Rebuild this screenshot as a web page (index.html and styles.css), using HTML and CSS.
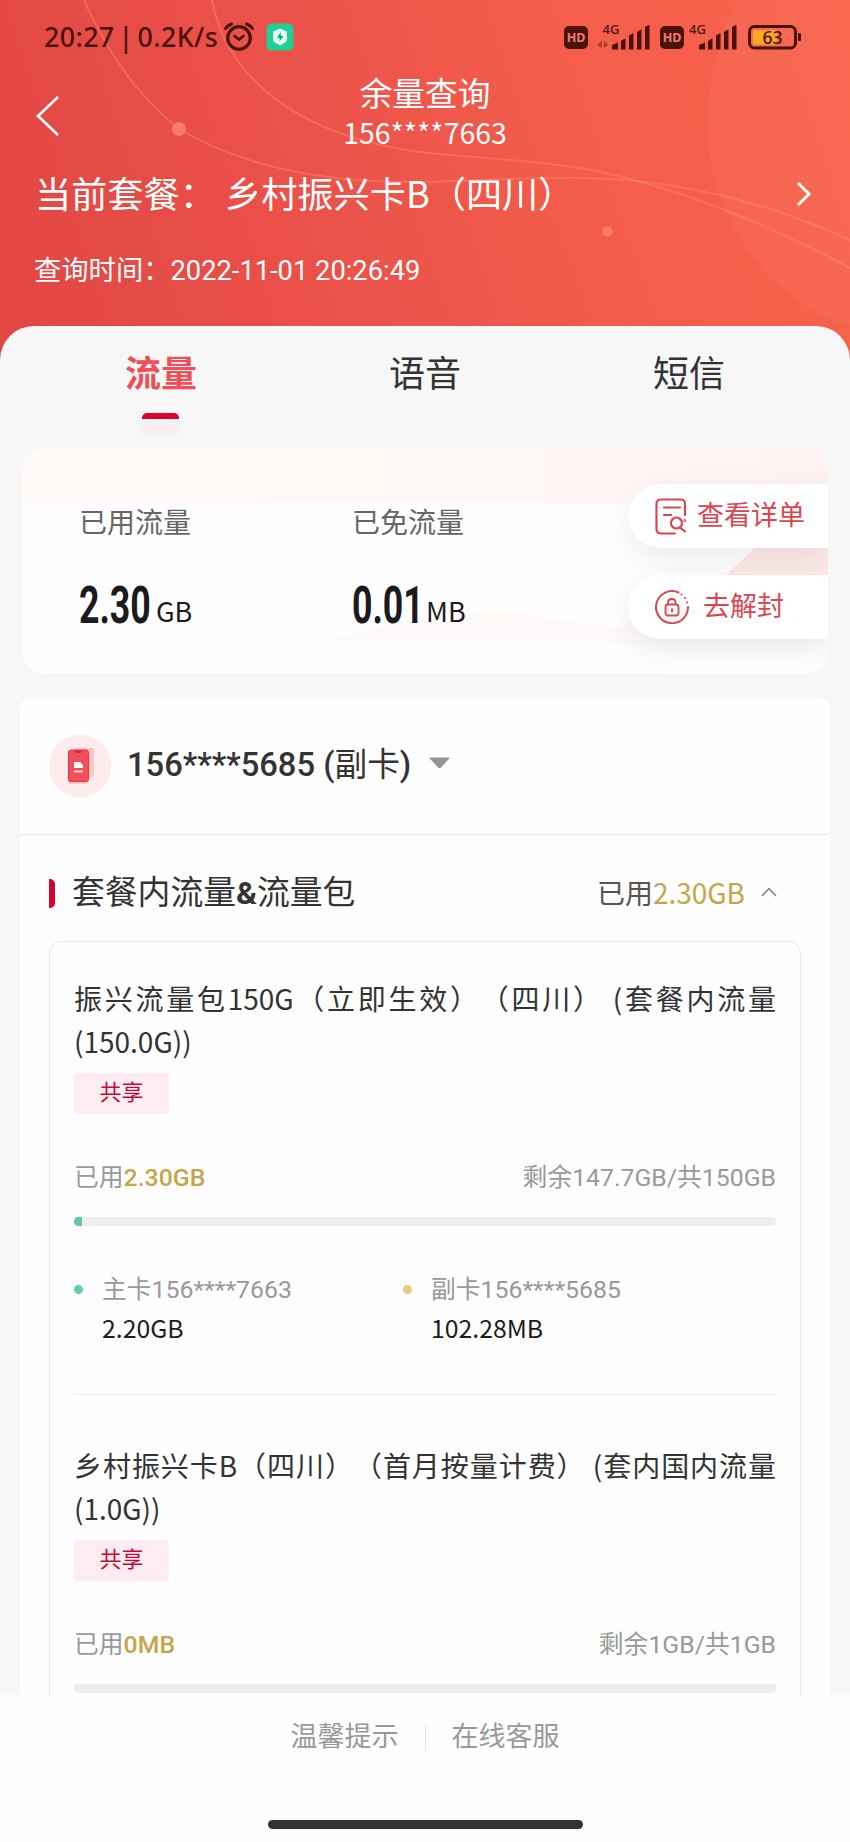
FILE: index.html
```html
<!DOCTYPE html>
<html lang="zh-CN">
<head>
<meta charset="utf-8">
<title>余量查询</title>
<link rel="stylesheet" href="styles.css">
</head>
<body>
<div class="screen">
  <header class="hero">
    <svg class="hero-art" viewBox="0 0 850 360" width="850" height="360" fill="none">
      <path class="bubble" d="M850 326C785 308 708 235 708 125C708 75 718 35 738 0H850Z"/>
      <path class="orbit" d="M84 0C93 20 100 32 110 50C131 84 154 109 179 129C226 157 300 184 425 182C480 180 520 178 575 178C670 178 760 199 850 240"/>
      <path class="orbit" d="M212 0C225 70 285 128 400 149C450 158 540 158 610 174C690 193 770 225 850 268"/>
      <circle class="spark" cx="179" cy="129" r="7"/>
      <circle class="spark" cx="607.500" cy="231.500" r="5"/>
    </svg>
    <div class="status">
      <span class="clock">20:27 | 0.2K/s</span>
      <svg class="alarm" width="32" height="30" viewBox="0 0 32 30" fill="none" stroke="#4b120d" stroke-linecap="round">
        <circle cx="16" cy="16" r="11.300" stroke-width="3.200"/>
        <path d="M11.500 14L16 17.500L20.500 14" stroke-width="2.800"/>
        <path d="M2.500 6.500Q5 3 8.500 2M29.500 6.500Q27 3 23.500 2" stroke-width="3"/>
      </svg>
      <svg class="shield" width="28" height="28" viewBox="0 0 28 28">
        <rect x=".5" y=".5" width="27" height="27" rx="5" fill="#1fcf94"/>
        <path d="M14 5.500L21 8.500V17Q21 19 14 22.500Q7 19 7 17V8.500Z" fill="#e2fff5"/>
        <path d="M14.800 9L10.800 14.800H13.600V18.600L17.400 13H14.800Z" fill="#15a674"/>
      </svg>
      <span class="hd">HD</span>
      <svg class="signal" width="54" height="36" viewBox="0 -8 54 36">
        <text class="net" x="5.500" y="10">4G</text>
        <path d="M0 21L5 16.500V24M7 24V16.500L11 21" fill="#a3402f"/>
        <path d="M15 21L21 18.500V25.500H15ZM24 17Q26 15 28.500 14.500V25.500H24ZM32 11.500Q34 10 36.500 9V25.500H32ZM40 8Q42 6 44.500 5.500V25.500H40ZM48 3Q50 1.500 52.500 1V25.500H48Z" fill="#4b120d"/>
      </svg>
      <span class="hd hd-second">HD</span>
      <svg class="signal signal-second" width="48" height="36" viewBox="0 -8 48 36">
        <text class="net" x="0" y="10">4G</text>
        <path d="M10 21L16 18.500V25.500H10ZM19 17Q21 15 23.500 14.500V25.500H19ZM27 11.500Q29 10 31.500 9V25.500H27ZM35 8Q37 6 39.500 5.500V25.500H35ZM43 3Q45 1.500 47.500 1V25.500H43Z" fill="#4b120d"/>
      </svg>
      <svg class="battery" width="54" height="25" viewBox="0 0 54 25">
        <rect x="1.500" y="1.500" width="46" height="21.500" rx="5" fill="none" stroke="#4b120d" stroke-width="3"/>
        <rect x="5" y="5" width="24" height="14.500" rx="2" fill="#f6a821"/>
        <rect x="50" y="8" width="3" height="8" rx="1" fill="#4b120d"/>
        <text class="level" x="24.500" y="18.500" text-anchor="middle">63</text>
      </svg>
    </div>
    <div class="navbar">
      <svg class="back" width="26" height="42" viewBox="0 0 26 42" fill="none"><path d="M23 2L3 21L23 40" stroke="#fff" stroke-width="2.600"/></svg>
      <div class="heading">
        <h1>余量查询</h1>
        <p>156****7663</p>
      </div>
    </div>
    <div class="plan">
      <span class="plan-label">当前套餐：</span>
      <span>乡村振兴卡B（四川）</span>
      <svg class="more" width="16" height="26" viewBox="0 0 16 26" fill="none"><path d="M2 2L13 13L2 24" stroke="#fff" stroke-width="3"/></svg>
    </div>
    <p class="time">查询时间：2022-11-01 20:26:49</p>
  </header>

  <main class="panel">
    <nav class="tabs">
      <span class="tab active">流量</span>
      <span class="tab">语音</span>
      <span class="tab">短信</span>
    </nav>

    <section class="summary">
      <svg class="waves" width="806" height="226" viewBox="0 0 806 226">
        <defs>
          <linearGradient id="fade" x2="1" y2="0"><stop offset="0" stop-color="#fff9f8"/><stop offset=".6" stop-color="#fff8f7"/><stop offset="1" stop-color="#fdf2f0"/></linearGradient>
          <linearGradient id="wave" x2="0" y2="1"><stop offset="0" stop-color="#fef5f3"/><stop offset="1" stop-color="#fefbfb"/></linearGradient>
        </defs>
        <rect width="806" height="56" fill="url(#fade)"/>
        <path d="M300 193Q400 166 465 165C530 166 550 178 600 178L806 150V198H300Z" fill="url(#wave)"/>
        <path d="M690 140L735 98L806 80V150Z" fill="#fdeae6"/>
      </svg>
      <div class="metric metric-used">
        <span class="metric-name">已用流量</span>
        <div class="metric-value"><span class="figure"><b>2.30</b></span><span class="unit">GB</span></div>
      </div>
      <div class="metric metric-free">
        <span class="metric-name">已免流量</span>
        <div class="metric-value"><span class="figure"><b>0.01</b></span><span class="unit unit-mb">MB</span></div>
      </div>
      <div class="actions">
        <a class="action">
          <svg width="32" height="37" viewBox="0 0 32 37" fill="none" stroke="#db4650" stroke-width="2.200" stroke-linecap="round">
            <path d="M20 35.500H6Q1.500 35.500 1.500 31V6Q1.500 1.500 6 1.500H26Q30 1.500 30 6V17M9 9.500H25M9 17H16M25.500 30L30 33.500"/>
            <circle cx="21.500" cy="25" r="5.500"/><circle cx="29.800" cy="22.500" r=".5"/>
          </svg>
          <span>查看详单</span>
        </a>
        <a class="action action-unlock">
          <svg width="34" height="34" viewBox="0 0 34 34" fill="none" stroke="#db4650" stroke-width="2" stroke-linecap="round">
            <path d="M23.500 2.500A16 16 0 1 0 33 17"/>
            <path d="M26.500 4.500h.1M30 8h.1M32 12.500h.1"/>
            <rect x="10.500" y="14.500" width="13" height="11" rx="2.500" stroke-width="1.800"/>
            <path d="M13 14V12.500Q13 9 17 9Q20.500 9 20.500 12.500V14M17 19V21.500" stroke-width="1.800"/>
          </svg>
          <span>去解封</span>
        </a>
      </div>
    </section>

    <section class="detail">
      <div class="owner">
        <svg class="avatar" width="64" height="64" viewBox="0 0 64 64">
          <circle cx="32" cy="32" r="31" fill="#fdebed"/>
          <rect x="26" y="14" width="20" height="29" rx="3" fill="#f9c3c5"/>
          <rect x="20" y="16" width="21" height="34" rx="3" fill="#fbc7c9"/>
          <rect x="20.500" y="16" width="20" height="31.500" rx="2.500" fill="#f0505a" stroke="#dc3844"/>
          <path d="M27 16.500H34L33 19H28Z" fill="#c92e3b"/>
          <path d="M26 28H32L35 31V34H26Z" fill="#fff"/><path d="M26 37.500H35" stroke="#ffd2d2" stroke-width="2"/>
        </svg>
        <span class="owner-name">156****5685 (<span class="owner-kind">副卡</span>)</span>
        <svg class="drop" width="21" height="12" viewBox="0 0 21 12"><path d="M1 .5H20Q21 .5 20 1.700L12 10.500Q10.500 12 9 10.500L1 1.700Q0 .5 1 .5Z" fill="#959595"/></svg>
      </div>

      <div class="group-head">
        <i class="marker"></i>
        <h2>套餐内流量<b>&amp;</b>流量包</h2>
        <span class="group-used">已用<em>2.30GB</em></span>
        <svg class="fold" width="16" height="10" viewBox="0 0 16 10" fill="none"><path d="M1 9L8 1.500L15 9" stroke="#777" stroke-width="1.400"/></svg>
      </div>

      <div class="packages">
        <article class="package">
          <h3>振兴流量包150G（立即生效）（四川） (套餐内流量(150.0G))</h3>
          <span class="tag">共享</span>
          <div class="quota"><span>已用<em>2.30GB</em></span><span>剩余147.7GB/共150GB</span></div>
          <div class="track"><i class="fill"></i></div>
          <div class="members">
            <div class="member">
              <i class="dot"></i>
              <p>主卡156****7663</p>
              <strong>2.20GB</strong>
            </div>
            <div class="member">
              <i class="dot dot-sub"></i>
              <p>副卡156****5685</p>
              <strong>102.28MB</strong>
            </div>
          </div>
        </article>
        <article class="package package-next">
          <h3>乡村振兴卡B（四川）（首月按量计费） (套内国内流量(1.0G))</h3>
          <span class="tag">共享</span>
          <div class="quota"><span>已用<em>0MB</em></span><span>剩余1GB/共1GB</span></div>
          <div class="track"></div>
        </article>
      </div>
    </section>
  </main>

  <footer class="footer">
    <div class="links"><span>温馨提示</span><i class="split"></i><span>在线客服</span></div>
    <div class="home-bar"></div>
  </footer>
</div>
</body>
</html>
```

FILE: styles.css
```css
* { box-sizing: border-box; margin: 0; padding: 0; }
body { background: #fff; }
i, em { font-style: normal; }
svg { display: block; flex: none; }

.screen {
  width: 850px;
  height: 1842px;
  display: flex;
  flex-direction: column;
  overflow: hidden;
  background: #f7f7f7;
  font-family: "Noto Sans CJK SC", sans-serif;
  color: #333;
  white-space: nowrap;
  text-spacing-trim: space-all;
}

/* header */
.hero {
  position: relative;
  flex: none;
  height: 360px;
  color: #fff;
  background: linear-gradient(72deg, #e14643 0%, #ec534a 42%, #f45d4b 68%, #f8644b 100%);
}
.hero-art { position: absolute; left: 0; top: 0; }
.bubble { fill: #fff; fill-opacity: .045; }
.orbit { stroke: #ff8f78; stroke-opacity: .4; stroke-width: 2; }
.spark { fill: #ff8877; fill-opacity: .75; }

.status {
  position: relative;
  height: 70px;
  padding: 0 48px 0 44px;
  display: flex;
  align-items: flex-start;
  color: #4b120d;
}
.clock {
  width: 180px;
  padding-top: 17px;
  font: 500 26.800px/40px "Noto Sans", sans-serif;
  letter-spacing: .4px;
  word-spacing: -3.500px;
}
.alarm { margin: 22px 0 0; }
.shield { margin: 23px 0 0 11px; }
.hd {
  width: 24px;
  height: 23px;
  margin: 26px 0 0 270px;
  border-radius: 5px;
  background: #4b120d;
  color: #f0806c;
  font: 700 12.500px/23px "Noto Sans", sans-serif;
  text-align: center;
}
.signal { margin: 16px 0 0 9px; }
.hd-second { margin-left: 9px; }
.signal-second { margin-left: 5px; }
.net { font: 500 13px "Noto Sans", sans-serif; fill: #4b120d; }
.battery { margin: 25px 0 0 11px; }
.level { font: 500 17.500px "Noto Sans", sans-serif; fill: #4b120d; }

.navbar { position: relative; height: 86px; }
.back { position: absolute; left: 35px; top: 25px; }
.heading { text-align: center; }
.heading h1 { font-size: 32.700px; line-height: 44px; font-weight: 400; }
.heading p { font-size: 28.400px; line-height: 36px; }

.plan {
  position: relative;
  height: 76px;
  padding: 0 38px 0 35px;
  display: flex;
  align-items: center;
  font-size: 36.200px;
}
.plan span { margin-top: -4px; }
.plan-label { width: 190px; }
.more { margin-left: auto; }
.time {
  position: relative;
  padding: 19px 0 0 34px;
  font: 27.300px/40px Roboto, "Noto Sans CJK SC", sans-serif;
}

/* content panel */
.panel {
  position: relative;
  flex: none;
  height: 1369px;
  margin-top: -34px;
  padding: 0 20px;
  overflow: hidden;
  border-radius: 34px 34px 0 0;
  background: #f7f7f7;
}
.tabs { height: 122px; padding: 0 9px; display: flex; }
.tab {
  position: relative;
  flex: 1;
  padding-top: 16px;
  text-align: center;
  font-size: 36px;
  line-height: 58px;
}
.active { color: #ef4f56; font-weight: 700; }
.active::after {
  content: "";
  position: absolute;
  left: 50%;
  top: 87px;
  width: 37px;
  height: 5.500px;
  margin-left: -19px;
  border-radius: 5px 5px 0 0;
  background: #d8052c;
  box-shadow: 0 11px 10px rgba(255, 90, 90, .14);
}

.summary {
  position: relative;
  height: 226px;
  margin: 0 2px;
  display: flex;
  overflow: hidden;
  border-radius: 24px;
  background: #fefefe;
}
.waves { position: absolute; left: 0; top: 0; }
.metric { position: relative; flex: none; padding-top: 53px; }
.metric-used { width: 273px; margin-left: 57px; }
.metric-free { width: 272px; }
.metric-name { display: block; font-size: 28px; line-height: 40px; color: #666; }
.metric-value { height: 70px; margin-top: 30px; display: flex; color: #1b1a1f; }
.figure { width: 77px; }
.figure b {
  display: block;
  width: 110px;
  transform: scaleX(.7);
  transform-origin: 0 0;
  font: 700 51px/70px Roboto, sans-serif;
}
.unit { font-size: 27px; line-height: 80px; }
.unit-mb { margin-left: -3px; }
.actions { position: relative; flex: 1; padding-top: 36px; display: flex; flex-direction: column; gap: 27px; }
.action {
  height: 64px;
  padding-left: 27px;
  margin-left: 4px;
  display: flex;
  align-items: center;
  gap: 10px;
  border-radius: 32px 0 0 32px;
  background: #fff;
  box-shadow: 0 10px 30px rgba(0, 0, 0, .08);
  color: #db4650;
  font-size: 27px;
}
.action span { position: relative; top: -3px; }
.action-unlock { gap: 14px; }

.detail { height: 1200px; margin-top: 23px; border-radius: 12px; background: #fefefe; }
.owner {
  height: 138px;
  padding: 0 0 0 28px;
  display: flex;
  align-items: center;
  border-bottom: 1px solid #e6e6e6;
}
.owner-name {
  margin: -1px 0 0 15px;
  font: 500 32.700px/46px Roboto, "Noto Sans CJK SC", sans-serif;
}
.owner-kind { font-weight: 400; }
.drop { margin: -5px 0 0 18px; }

.group-head { height: 106px; padding: 0 53px 0 29px; display: flex; align-items: center; }
.marker { width: 6px; height: 29px; margin-top: 11px; border-radius: 0 5px 5px 0; background: #d2042d; }
.group-head h2 { margin: 7px 0 0 17px; font-size: 32.800px; line-height: 46px; font-weight: 400; }
.group-head h2 b { font-family: Roboto, sans-serif; font-weight: 700; font-size: 32px; }
.group-used { margin: 7px 0 0 auto; font-size: 28px; line-height: 40px; color: #555; }
.group-used em { color: #c6a549; }
.fold { margin: 7px 0 0 16px; }

.packages {
  height: 1000px;
  margin: 0 29px;
  padding: 0 24px;
  border: 1px solid #e9e9e9;
  border-radius: 12px;
}
.package { height: 453px; padding-top: 35px; border-bottom: 1px solid #ebebeb; }
.package-next { padding-top: 49px; border: 0; }
.package h3 {
  font-size: 28px;
  line-height: 42.500px;
  font-weight: 400;
  text-align: justify;
  white-space: normal;
}
.tag {
  display: block;
  width: 95px;
  height: 41px;
  margin-top: 11px;
  border-radius: 4px;
  background: #fdedf1;
  color: #c20a3a;
  font-size: 22px;
  line-height: 34px;
  text-align: center;
}
.quota {
  margin-top: 46px;
  display: flex;
  justify-content: space-between;
  font: 24.800px/36px Roboto, "Noto Sans CJK SC", sans-serif;
  color: #999;
}
.quota em { color: #c7a549; font-weight: 500; }
.track { height: 9px; margin-top: 21px; border-radius: 4px; background: #eee; overflow: hidden; }
.fill { display: block; width: 8px; height: 9px; border-radius: 4px 0 0 4px; background: #62c9a1; }
.members { margin-top: 46px; display: flex; }
.member { position: relative; width: 329px; padding-left: 28px; }
.member p { font: 24.800px/36px Roboto, "Noto Sans CJK SC", sans-serif; color: #999; }
.member strong { display: block; font-size: 24.800px; line-height: 38px; font-weight: 400; color: #1c1c1c; }
.dot { position: absolute; left: 0; top: 13px; width: 9px; height: 9px; border-radius: 50%; background: #5fd0a4; }
.dot-sub { background: #f0c582; }

/* footer */
.footer { flex: 1; padding-top: 18px; background: #fefefe; }
.links { height: 42px; display: flex; align-items: center; justify-content: center; font-size: 27px; color: #999; }
.split { width: 1px; height: 25px; margin: 9px 26px 0; background: #e3e3e3; }
.home-bar { width: 315px; height: 9px; margin: 65px auto 0; border-radius: 5px; background: #333; }
```
